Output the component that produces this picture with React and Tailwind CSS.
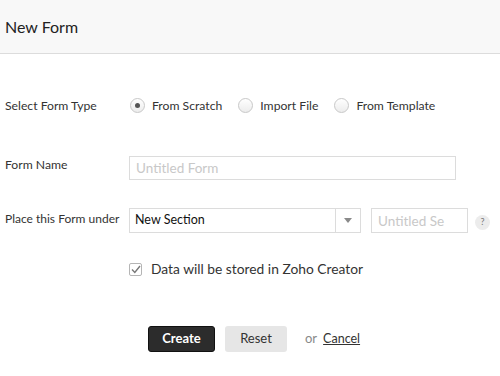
import React, { useState } from "react";

function Radio({ checked, label, onClick }) {
  return (
    <label className="flex items-center cursor-pointer" onClick={onClick}>
      <span className="w-[15px] h-[15px] rounded-full border border-[#c8c8c8] bg-gradient-to-b from-white to-[#ececec] flex items-center justify-center">
        {checked && <span className="w-[5px] h-[5px] rounded-full bg-[#555]" />}
      </span>
      <span className="ml-[7px] text-[12.2px] text-[#333]">{label}</span>
    </label>
  );
}

export default function App() {
  const [type, setType] = useState("scratch");
  const [stored, setStored] = useState(true);

  return (
    <div className="w-[500px] h-[376px] bg-white font-['Lato',sans-serif] text-[#333] overflow-hidden">
      {/* Header */}
      <div className="h-[54px] bg-[#f8f8f8] border-b border-[#dcdcdc] flex items-center px-[5px]">
        <h1 className="text-[16px] text-[#222]">New Form</h1>
      </div>

      <div className="px-[5px]">
        {/* Form type */}
        <div className="mt-[40px] h-[24px] flex items-center">
          <span className="w-[125px] text-[12.2px]">Select Form Type</span>
          <div className="flex items-center gap-[16px]">
            <Radio checked={type === "scratch"} label="From Scratch" onClick={() => setType("scratch")} />
            <Radio checked={type === "import"} label="Import File" onClick={() => setType("import")} />
            <Radio checked={type === "template"} label="From Template" onClick={() => setType("template")} />
          </div>
        </div>

        {/* Form name */}
        <div className="mt-[38px] h-[24px] flex items-center">
          <span className="w-[124px] text-[12.2px] -mt-[6px]">Form Name</span>
          <input
            type="text"
            placeholder="Untitled Form"
            className="w-[327px] h-[24px] border border-[#dcdcdc] px-[6px] text-[13.5px] outline-none placeholder:text-[#c8c8c8]"
          />
        </div>

        {/* Section */}
        <div className="mt-[28px] h-[25px] flex items-center">
          <span className="w-[124px] text-[12px] -mt-[4px]">Place this Form under</span>
          <div className="w-[232px] h-[25px] border border-[#dcdcdc] flex items-center">
            <span className="flex-1 px-[5px] text-[12.5px] text-[#111]">New Section</span>
            <span className="w-[25px] h-full border-l border-[#dcdcdc] flex items-center justify-center">
              <span className="w-0 h-0 border-l-[4px] border-r-[4px] border-t-[5px] border-l-transparent border-r-transparent border-t-[#8a8a8a]" />
            </span>
          </div>
          <input
            type="text"
            placeholder="Untitled Se"
            className="ml-[10px] w-[97px] h-[25px] border border-[#dcdcdc] px-[6px] text-[13.5px] outline-none placeholder:text-[#c8c8c8]"
          />
          <span className="ml-[7px] mt-[3px] w-[15px] h-[15px] rounded-full bg-[#ececec] flex items-center justify-center text-[9px] text-[#777]">
            ?
          </span>
        </div>

        {/* Storage */}
        <div className="mt-[26px] h-[20px] flex items-center pl-[124px]">
          <span
            onClick={() => setStored(!stored)}
            className="w-[13px] h-[13px] border border-[#b5b5b5] rounded-[2px] bg-white flex items-center justify-center cursor-pointer"
          >
            {stored && (
              <svg width="10" height="9" viewBox="0 0 10 9" fill="none">
                <path d="M1 4.6 L3.8 7.4 L9 1" stroke="#777" strokeWidth="1.4" />
              </svg>
            )}
          </span>
          <span className="ml-[9px] text-[13.8px]">Data will be stored in Zoho Creator</span>
        </div>

        {/* Actions */}
        <div className="mt-[47px] flex items-center pl-[143px]">
          <button className="w-[67px] h-[26px] rounded-[3px] bg-[#2c2c2c] border border-[#111] text-white text-[13px] font-bold">
            Create
          </button>
          <button className="ml-[10px] w-[62px] h-[26px] rounded-[3px] bg-[#e6e6e6] text-[#333] text-[13px]">
            Reset
          </button>
          <span className="ml-[18px] text-[13px] text-[#888]">or</span>
          <a href="#" className="ml-[6px] text-[12.5px] text-[#333] underline">Cancel</a>
        </div>
      </div>
    </div>
  );
}
